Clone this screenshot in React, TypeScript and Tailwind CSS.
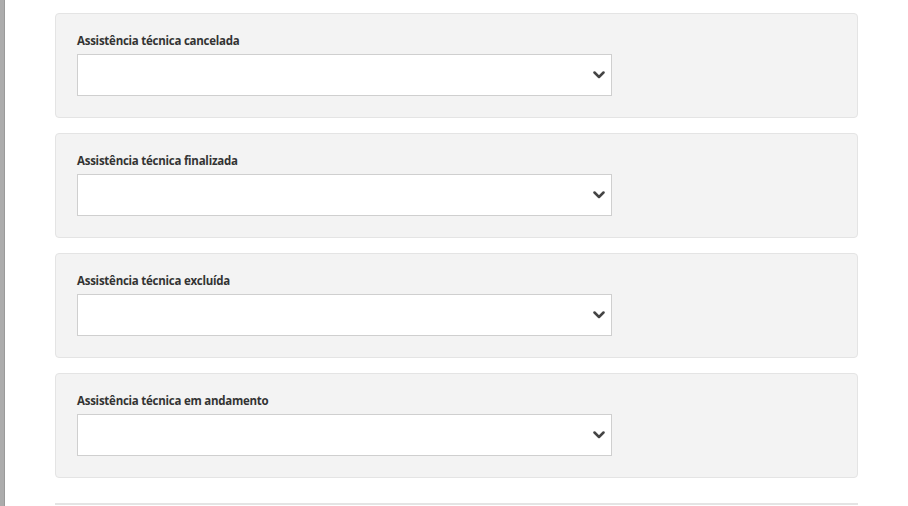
const fields = [
  'Assistência técnica cancelada',
  'Assistência técnica finalizada',
  'Assistência técnica excluída',
  'Assistência técnica em andamento',
]

function Chevron() {
  return (
    <svg className="w-[12px] h-[8px]" viewBox="0 0 12 8" fill="none">
      <path d="M1.5 1.5L6 6l4.5-4.5" stroke="#444" strokeWidth={2.5} strokeLinecap="round" strokeLinejoin="round" />
    </svg>
  )
}

function FieldCard({ label }: { label: string }) {
  return (
    <div className="bg-[#f3f3f3] border border-[#e4e4e4] rounded-[4px] pl-[21px] pr-[21px] pt-[19px] pb-[21px]">
      <label className="block text-[11.5px] leading-[16px] font-bold text-[#333] mb-[5px] tracking-[-0.25px]">{label}</label>
      <div className="w-[535px] h-[42px] bg-white border border-[#cfcfcf] flex items-center justify-end pr-[6px]">
        <Chevron />
      </div>
    </div>
  )
}

export default function App() {
  return (
    <div className="flex min-h-screen bg-white" style={{ fontFamily: '"Open Sans", "Noto Sans", sans-serif' }}>
      <div className="w-[5px] shrink-0 bg-[#acacac] border-r border-[#9a9a9a]" />
      <div className="flex-1 pl-[50px] pr-[50px] pt-[13px]">
        <div className="flex flex-col gap-[15px]">
          {fields.map((f) => (
            <FieldCard key={f} label={f} />
          ))}
        </div>
        <div className="mt-[25px] border-t-2 border-[#e4e4e4] h-[10px]" />
      </div>
    </div>
  )
}
